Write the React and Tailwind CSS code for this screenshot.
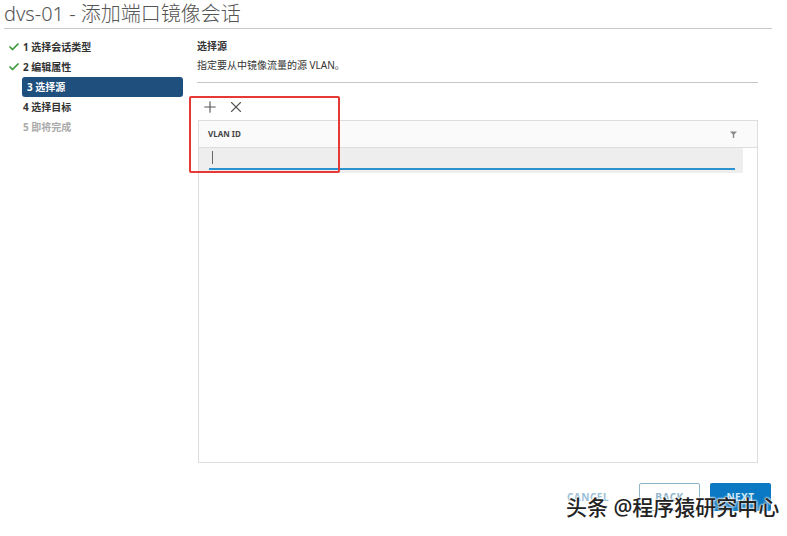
import { Check, Plus, X } from "lucide-react";

const steps = [
  { n: 1, label: "选择会话类型", done: true },
  { n: 2, label: "编辑属性", done: true },
  { n: 3, label: "选择源", active: true },
  { n: 4, label: "选择目标" },
  { n: 5, label: "即将完成", muted: true },
];

function App() {
  return (
    <div
      className="relative h-[536px] w-[787px] overflow-hidden bg-white text-[#333]"
      style={{ fontFamily: '"Noto Sans", "Noto Sans CJK SC", sans-serif' }}
    >
      <div className="px-[4px] pt-[1px]">
        <h1 className="text-[20px] leading-[26px] font-light text-[#555]">dvs-01 - 添加端口镜像会话</h1>
        <div className="mt-[1px] h-px w-[768px] bg-[#c8c8c8]" />
      </div>

      <div className="flex">
        <div className="w-[183px] shrink-0 pt-[8px] pl-[8px]">
          {steps.map((s) => (
            <div
              key={s.n}
              className={`flex h-[20px] items-center text-[10px] font-bold ${
                s.active ? "ml-[14px] rounded-[3px] bg-[#1f4f7d] pl-[5px] text-white" : "pl-0"
              } ${s.muted ? "text-[#aaa]" : s.active ? "" : "text-[#333]"}`}
            >
              {s.done ? (
                <Check className="mr-[3px] h-[12px] w-[12px] text-[#3a9a3a]" strokeWidth={3.5} />
              ) : s.active ? null : (
                <span className="inline-block w-[15px]" />
              )}
              <span>
                {s.n} {s.label}
              </span>
            </div>
          ))}
        </div>

        <div className="ml-[14px] w-[561px] pt-[8px]">
          <div className="text-[10px] leading-[19px] font-bold text-[#333]">选择源</div>
          <div className="text-[10px] leading-[19px] text-[#333]">指定要从中镜像流量的源 VLAN。</div>
          <div className="mt-[7px] h-px bg-[#c8c8c8]" />

          <div className="mt-[15px] flex items-center gap-[8px] pl-[4px] text-[#555]">
            <Plus className="h-[18px] w-[18px]" strokeWidth={1.5} />
            <X className="h-[18px] w-[18px]" strokeWidth={1.5} />
          </div>

          <div className="mt-[4px] ml-[1px] flex h-[343px] flex-col border border-[#ddd]">
            <div className="flex h-[27px] items-center justify-between border-b border-[#ddd] bg-[#fafafa] pr-[20px] pl-[9px]">
              <span className="text-[8px] font-bold text-[#444]">VLAN ID</span>
              <svg width="7" height="7" viewBox="0 0 7 7">
                <path d="M0 0.5h7L4.2 3.5v3.5h-1.4V3.5z" fill="#888" />
              </svg>
            </div>
            <div className="mr-[14px] flex h-[25px] items-end bg-[#eeeeee] pr-[8px] pl-[10px]">
              <div className="flex h-full w-full flex-col justify-end">
                <div className="mb-[4px] ml-[3px] h-[13px] w-px bg-[#666]" />
                <div className="mb-[3px] h-[2px] w-full bg-[#2d93cf]" />
              </div>
            </div>
            <div className="flex-1" />
          </div>
        </div>
      </div>

      <div className="mt-[20px] flex items-center justify-end gap-[10px] pr-[16px]">
        <span className="mr-[20px] text-[10px] font-bold tracking-wider text-[#9cbfd6]">CANCEL</span>
        <div className="flex h-[28px] w-[61px] items-center justify-center rounded-[2px] border border-[#8fb4c9] text-[10px] font-bold tracking-wider text-[#8fb4c9]">
          BACK
        </div>
        <div className="flex h-[28px] w-[61px] items-center justify-center rounded-[2px] bg-[#0a78c2] text-[10px] font-bold tracking-wider text-[#cfe6f5]">
          NEXT
        </div>
      </div>

      <div
        className="absolute top-[494px] left-[566px] text-[21px] leading-[26px] font-medium text-[#222]"
        style={{ textShadow: "0 0 2px #fff, 0 0 2px #fff, 0 0 3px #fff" }}
      >
        头条 @程序猿研究中心
      </div>

      <div className="absolute top-[96px] left-[189px] h-[77px] w-[151px] rounded-[2px] border-2 border-[#e53935]" />
    </div>
  );
}

export default App;
